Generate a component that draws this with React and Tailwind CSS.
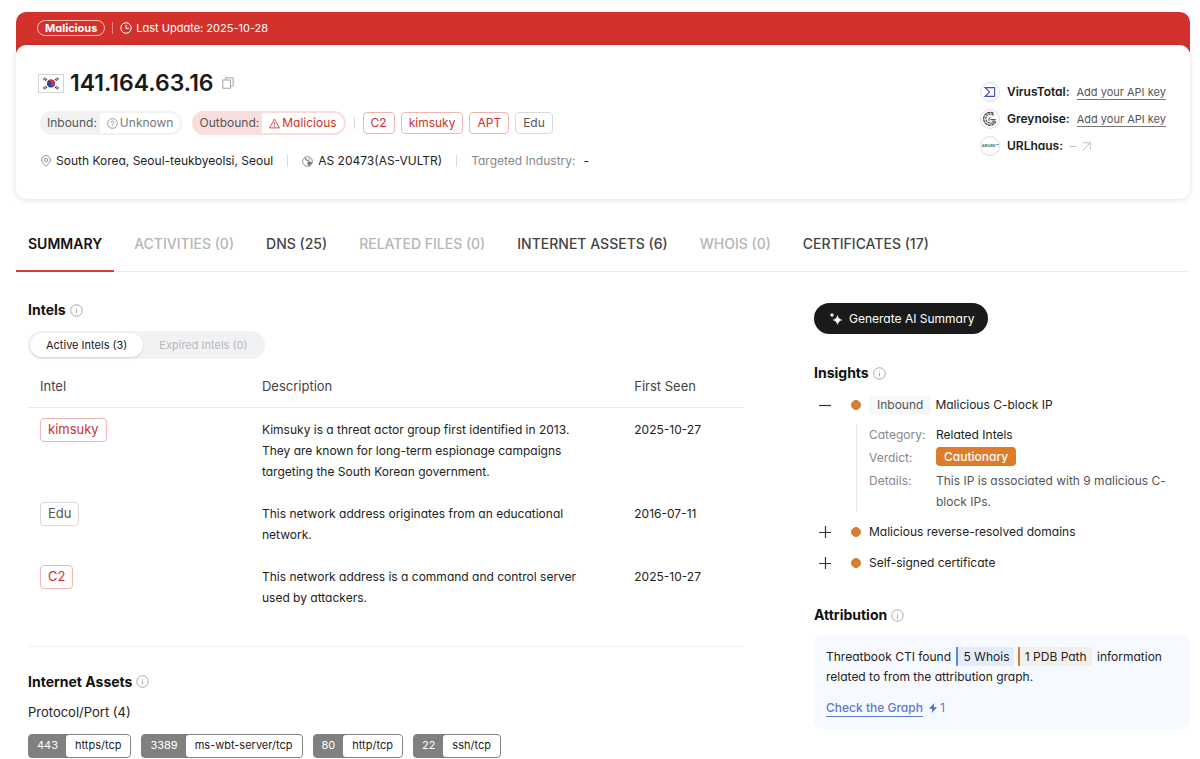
import React from "react";

const Info = () => (
  <svg viewBox="0 0 14 14" className="size-[13px] shrink-0" fill="none" stroke="#a3a3a3" strokeWidth="1">
    <circle cx="7" cy="7" r="6.2" />
    <path d="M7 6.2v4M7 3.8v1" />
  </svg>
);

const Heading = ({ children }) => (
  <div className="flex items-center gap-1">
    <h2 className="text-sm leading-5 font-bold text-[#111]">{children}</h2>
    <button type="button" aria-label={`About ${children}`} className="flex"><Info /></button>
  </div>
);

const Divider = () => <span className="h-3 w-px bg-[#d9d9d9]" />;

const Tag = ({ children, gray, tall }) => (
  <span
    className={`inline-flex items-center rounded-[4px] border px-[7px] ${tall ? "h-6 text-[13px]" : "h-[22px] text-xs"} ${
      gray ? "border-[#d9d9d9] text-[#555]" : "border-[#f0b4b1] text-[#cb322c]"
    }`}
  >
    {children}
  </span>
);

const Flag = () => (
  <svg viewBox="0 0 26 19" className="h-[19px] w-[26px] shrink-0">
    <rect x=".5" y=".5" width="25" height="18" fill="#fff" stroke="#d4d4d4" />
    <circle cx="13" cy="9.500" r="4" fill="#21489c" />
    <path d="M9 9.500a4 4 0 0 1 8 0a2 2 0 0 1-4 0a2 2 0 0 0-4 0z" fill="#d0383c" transform="rotate(15 13 9.500)" />
    <g stroke="#333" strokeWidth="1">
      <path d="M5.200 5.600l1.600-2.100M6.300 6.300l1.600-2.100M7.400 7l1.600-2.100" />
      <path d="M20.800 5.600l-1.600-2.100M19.700 6.300l-1.600-2.100M18.600 7l-1.600-2.100" />
      <path d="M5.200 13.400l1.600 2.100M6.300 12.700l1.600 2.100M7.400 12l1.600 2.100" />
      <path d="M20.800 13.400l-1.600 2.100M19.700 12.700l-1.600 2.100M18.600 12l-1.600 2.100" />
    </g>
  </svg>
);

const VirusTotalLogo = () => (
  <svg viewBox="0 0 20 20" className="size-5">
    <circle cx="10" cy="10" r="9.4" fill="#fff" stroke="#d4d4d4" strokeWidth=".8" />
    <path d="M5.200 5.700h9.400v8.600H5.200L9.600 10z" fill="none" stroke="#4150c8" strokeWidth="1.2" />
  </svg>
);

const GreynoiseLogo = () => (
  <svg viewBox="0 0 20 20" className="size-5" fill="none" stroke="#444">
    <circle cx="10" cy="10" r="9.4" fill="#fff" stroke="#d4d4d4" strokeWidth=".8" />
    <path d="M13.5 4.4A6.4 6.4 0 1 0 15.8 12.6" strokeWidth="1.3" strokeDasharray="3 .5" />
    <path d="M13.6 6.3A4.6 4.6 0 1 0 13.9 12.6" strokeWidth="1.1" strokeDasharray="2.4 .5" />
    <path d="M10.5 8.3A2.3 2.3 0 0 0 9.9 12.4M10.4 10.6h5.4M12.2 12.1h3" strokeWidth="1" />
  </svg>
);

const UrlhausLogo = () => (
  <svg viewBox="0 0 20 20" className="size-5">
    <circle cx="10" cy="10" r="9.4" fill="#fff" stroke="#d4d4d4" strokeWidth=".8" />
    <text x="8.6" y="11.4" fontSize="4" fontWeight="700" textAnchor="middle" fill="#3f7480">ABUSE</text>
    <path d="M16 8.6h2.6" stroke="#3f7480" strokeWidth=".8" />
  </svg>
);

const sources = [
  { name: "VirusTotal:", Logo: VirusTotalLogo },
  { name: "Greynoise:", Logo: GreynoiseLogo },
  { name: "URLhaus:", Logo: UrlhausLogo, empty: true },
];

const tabs = [
  ["SUMMARY", "active"],
  ["ACTIVITIES (0)", "off"],
  ["DNS (25)", "on"],
  ["RELATED FILES (0)", "off"],
  ["INTERNET ASSETS (6)", "on"],
  ["WHOIS (0)", "off"],
  ["CERTIFICATES (17)", "on"],
];

const tabStyles = {
  active: "border-[#cf4034] font-semibold text-[#111]",
  on: "border-transparent font-medium text-[#444]",
  off: "border-transparent font-medium text-[#b5b5b5]",
};

const intels = [
  { tag: "kimsuky", date: "2025-10-27", text: "Kimsuky is a threat actor group first identified in 2013. They are known for long-term espionage campaigns targeting the South Korean government." },
  { tag: "Edu", gray: true, date: "2016-07-11", text: "This network address originates from an educational network." },
  { tag: "C2", date: "2025-10-27", text: "This network address is a command and control server used by attackers." },
];

const ports = [
  ["443", "https/tcp"],
  ["3389", "ms-wbt-server/tcp"],
  ["80", "http/tcp"],
  ["22", "ssh/tcp"],
];

const Toggle = ({ open, label }) => (
  <button type="button" aria-expanded={!!open} aria-label={label} className="flex w-[22px] justify-center">
    <svg viewBox="0 0 12 12" className="size-3" stroke="#333" strokeWidth="1.2">
      <path d={open ? "M0 6.500h12" : "M0 6.500h12M6.500 0v12"} />
    </svg>
  </button>
);

const Dot = () => <span className="mr-2 ml-[15px] size-[10px] shrink-0 rounded-full border border-[#c08552] bg-[#e07b2a]" />;

export default function App() {
  return (
    <div className="min-h-screen bg-white pt-3 pr-[10px] pl-4 font-['Inter','Liberation_Sans',sans-serif] text-xs text-[#222] [font-feature-settings:'cv11']">
      <header>
        <div className="flex h-10 items-start gap-[7px] rounded-t-[10px] bg-[#d2322b] pt-2 pl-[21px] text-[11px] text-white">
          <span className="flex h-4 items-center rounded-full border border-white/70 px-[7px] font-bold">Malicious</span>
          <span className="mt-[2px] h-3 w-px bg-white/40" />
          <span className="flex h-4 items-center gap-1">
            <svg viewBox="0 0 12 12" className="size-3" fill="none" stroke="#fff"><circle cx="6" cy="6" r="5.2" /><path d="M6 2.8V6.4h3" /></svg>
            Last Update: 2025-10-28
          </span>
        </div>
        <div className="relative -mt-[7px] flex justify-between rounded-[10px] bg-white pt-[22px] pr-6 pb-7 pl-[22px] shadow-[0_1px_6px_rgba(0,0,0,0.12)]">
          <div>
            <div className="flex h-8 items-center">
              <Flag />
              <h1 className="ml-[6px] text-[23px] leading-8 font-semibold text-[#1a1a1a]">141.164.63.16</h1>
              <button type="button" aria-label="Copy address" className="ml-2 flex">
                <svg viewBox="0 0 12 12" className="size-3" fill="none" stroke="#999" strokeWidth=".9"><rect x=".8" y="3" width="7.6" height="8.2" /><path d="M3.6 3V.8h7.6V9H8.4" /></svg>
              </button>
            </div>
            <div className="mt-3 ml-[2px] flex items-center">
              <span className="flex h-6 items-center overflow-hidden rounded-full border-2 border-[#f2f2f2] bg-[#f2f2f2] text-[#555]">
                <span className="pr-[3px] pl-[5px]">Inbound:</span>
                <span className="flex h-full items-center gap-[2px] bg-white px-[7px] text-[#777]">
                  <svg viewBox="0 0 12 12" className="size-[11px]" fill="none" stroke="#888" strokeWidth=".9"><circle cx="6" cy="6" r="5.3" /><path d="M4.5 5a1.5 1.5 0 1 1 2.2 1.2Q6 6.6 6 7.3M6 8.2v1" /></svg>
                  Unknown
                </span>
              </span>
              <span className="ml-[10px] flex h-6 items-center overflow-hidden rounded-full border-2 border-[#f8dedd] bg-[#f8dedd] text-[#555]">
                <span className="pr-[3px] pl-[5px]">Outbound:</span>
                <span className="flex h-full items-center gap-[2px] bg-white px-[7px] text-[#cb322c]">
                  <svg viewBox="0 0 12 12" className="size-[11px]" fill="none" stroke="#cb322c" strokeWidth=".9"><path d="M6 1.2L11.4 10.8H.6zM6 4.6v3M6 8.6v1" /></svg>
                  Malicious
                </span>
              </span>
              <span className="mx-2 flex"><Divider /></span>
              <span className="flex gap-[6px]">
                <Tag>C2</Tag><Tag>kimsuky</Tag><Tag>APT</Tag><Tag gray>Edu</Tag>
              </span>
            </div>
            <div className="mt-4 flex h-5 items-center">
              <svg viewBox="0 0 12 12" className="mr-1 ml-[2px] size-3" fill="none" stroke="#888" strokeWidth=".9"><path d="M6 11.3C3.6 9 1.6 7.1 1.6 4.9a4.4 4.4 0 0 1 8.8 0C10.400 7.1 8.400 9 6 11.3z" /><circle cx="6" cy="5" r="1.6" /></svg>
              South Korea, Seoul-teukbyeolsi, Seoul
              <span className="mx-[14px] flex"><Divider /></span>
              <svg viewBox="0 0 12 12" className="mr-[5px] size-[11px]" fill="none" stroke="#777" strokeWidth=".9"><circle cx="6" cy="6" r="5.3" /><path d="M3 1.800L4.500 4.500 7 5l2.500 2.500M7 5l1.500-2.500M6.500 6.500l-.3 1.700 1.500 2.500L9.500 9l1-2z" fill="#777" /></svg>
              AS 20473(AS-VULTR)
              <span className="mx-[14px] flex"><Divider /></span>
              <span className="text-[#888]">Targeted Industry:</span>
              <span className="ml-2">-</span>
            </div>
          </div>
          <ul className="flex flex-col gap-[7px] pt-[15px]">
            {sources.map(({ name, Logo, empty }) => (
              <li key={name} className="flex h-5 items-center">
                <Logo />
                <span className="mx-[7px] font-semibold text-[#1a1a1a]">{name}</span>
                {empty ? (
                  <a href="#urlhaus" aria-label="Open URLhaus" className="flex items-center gap-[6px] text-[#bbb]">
                    –
                    <svg viewBox="0 0 10 10" className="size-[9px]" fill="none" stroke="#bbb"><path d="M.8 9.200L9.200.8M1.500.8h7.700v7.700" /></svg>
                  </a>
                ) : (
                  <a href="#keys" className="border-b border-[#777] text-[11px] leading-[14px] text-[#555]">Add your API key</a>
                )}
              </li>
            ))}
          </ul>
        </div>
      </header>

      <nav className="mt-[18px] flex gap-2 border-b border-[#ececec]">
        {tabs.map(([label, kind]) => (
          <button key={label} type="button" className={`-mb-px h-[55px] border-b-2 px-3 text-sm ${tabStyles[kind]}`}>{label}</button>
        ))}
      </nav>

      <div className="grid grid-cols-[minmax(0,1fr)_376px] gap-[70px] pl-3">
        <main className="pt-7">
          <Heading>Intels</Heading>
          <div className="mt-[11px] flex h-7 w-fit items-center rounded-full bg-[#f1f2f4] p-[2px] text-[11px]">
            <button type="button" className="h-full rounded-full bg-white px-4 text-[#222] shadow-sm">Active Intels (3)</button>
            <button type="button" className="h-full px-4 text-[#b8b8b8]">Expired Intels (0)</button>
          </div>
          <table className="mt-[6px] w-full table-fixed border-collapse text-left leading-[21px]">
            <colgroup><col className="w-[31%]" /><col className="w-[52%]" /><col className="w-[17%]" /></colgroup>
            <thead>
              <tr className="h-[42px] border-b border-[#ececec] text-[13px] text-[#444]">
                <th className="px-3 pt-[2px] font-normal">Intel</th>
                <th className="px-3 pt-[2px] font-normal">Description</th>
                <th className="px-3 pt-[2px] font-normal">First Seen</th>
              </tr>
            </thead>
            <tbody>
              {intels.map((r) => (
                <tr key={r.tag} className="align-top">
                  <td className="px-3 pt-[10px]"><Tag gray={r.gray} tall>{r.tag}</Tag></td>
                  <td className="pt-[11px] pr-9 pb-[10px] pl-3">{r.text}</td>
                  <td className="px-3 pt-[11px]">{r.date}</td>
                </tr>
              ))}
            </tbody>
          </table>
          <section className="mt-7 border-t border-[#f0f0f0] pt-[25px]">
            <Heading>Internet Assets</Heading>
            <p className="mt-[10px] text-[13px] leading-5">Protocol/Port (4)</p>
            <ul className="mt-3 flex gap-[10px] text-[11px]">
              {ports.map(([n, p]) => (
                <li key={n} className="flex h-6 items-center rounded-[4px] border border-[#808080] bg-[#808080] text-white">
                  <span className="px-2">{n}</span>
                  <span className="flex h-full items-center rounded-[3px] bg-white px-[9px] text-[#222]">{p}</span>
                </li>
              ))}
            </ul>
          </section>
        </main>

        <aside className="pt-[31px]">
          <button type="button" className="flex h-[31px] items-center gap-[7px] rounded-full bg-[#1a1a1a] pr-[14px] pl-4 text-xs text-white">
            <svg viewBox="0 0 12 12" className="size-3" fill="#fff"><path d="M7.500 2.500Q8.300 6.200 12 7 8.300 7.800 7.500 11.500 6.700 7.800 3 7 6.700 6.200 7.500 2.500zM2 0Q2.300 1.700 4 2 2.300 2.300 2 4 1.700 2.300 0 2 1.700 1.700 2 0z" stroke="#fff" strokeWidth=".4" /></svg>
            Generate AI Summary
          </button>
          <div className="mt-[29px]"><Heading>Insights</Heading></div>

          <div className="mt-3 flex h-5 items-center">
            <Toggle open label="Malicious C-block IP" /><Dot />
            <span className="mr-1 flex h-[18px] items-center bg-[#f5f7f9] px-2 text-[#555]">Inbound</span>
            Malicious C-block IP
          </div>
          <dl className="mt-[9px] ml-[42px] grid grid-cols-[55px_1fr] gap-x-3 border-l border-[#e8e8e8] pl-3 leading-[21px]">
            <dt className="text-[#888]">Category:</dt>
            <dd>Related Intels</dd>
            <dt className="mt-[2px] text-[#888]">Verdict:</dt>
            <dd className="pt-[1px]"><span className="inline-flex h-[19px] items-center rounded-[4px] bg-[#e07b2a] px-2 font-medium text-white">Cautionary</span></dd>
            <dt className="mt-[2px] text-[#888]">Details:</dt>
            <dd className="mt-[2px] text-[#555]">This IP is associated with 9 malicious C-block IPs.</dd>
          </dl>
          <div className="mt-[10px] flex h-5 items-center"><Toggle label="Malicious reverse-resolved domains" /><Dot />Malicious reverse-resolved domains</div>
          <div className="mt-[11px] flex h-5 items-center"><Toggle label="Self-signed certificate" /><Dot />Self-signed certificate</div>

          <div className="mt-8"><Heading>Attribution</Heading></div>
          <div className="mt-[10px] rounded-[8px] bg-[#f6f9ff] px-3 pt-3 pb-[11px] leading-5">
            <p>
              <span>Threatbook CTI found</span>{" "}
              <span className="ml-[2px] inline-block border-l-2 border-[#5a8be0] bg-[#e4ecfc] px-[5px] leading-[19px]">5 Whois</span>{" "}
              <span className="mr-[2px] inline-block border-l-2 border-[#d08030] bg-[#f5efec] px-[5px] leading-[19px]">1 PDB Path</span>{" "}
              <span>information</span>
              <br />
              <span>related to from the attribution graph.</span>
            </p>
            <div className="mt-[11px] flex items-center gap-[5px] text-[#5b7bcb]">
              <a href="#graph" className="border-b border-[#5b7bcb] leading-4 font-medium">Check the Graph</a>
              <span className="flex items-center gap-[2px]">
                <svg viewBox="0 0 10 10" className="size-[10px]" fill="#4468c4"><path d="M6.500 0L1 5.800h3.500L3.500 10 9 4.200H5.500z" /></svg>
                1
              </span>
            </div>
          </div>
        </aside>
      </div>
    </div>
  );
}
